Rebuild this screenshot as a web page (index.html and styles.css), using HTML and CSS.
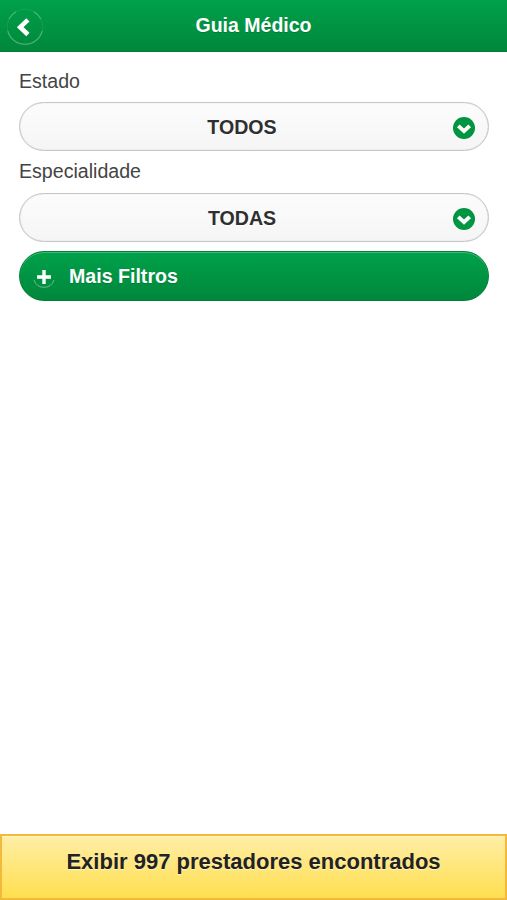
FILE: index.html
```html
<!DOCTYPE html>
<html lang="pt-BR">
<head>
<meta charset="utf-8">
<title>Guia Médico</title>
<link rel="stylesheet" href="styles.css">
</head>
<body>
<header class="header">
  <a class="back" aria-label="Voltar"><svg width="38" height="38" viewBox="0 0 38 38"><path d="M1.8 23A17.8 17.8 0 0 0 36.2 23M3 11A17.8 17.8 0 0 1 10 3.7M28 3.7A17.8 17.8 0 0 1 35 11" fill="none" stroke="#fff" stroke-opacity=".26" stroke-width="1.2"/><circle cx="19" cy="19" r="17.8" fill="none" stroke="#fff" stroke-opacity=".08"/><path d="M21.9 11.9 14.2 19.2 21.9 26.5" fill="none" stroke="#fff" stroke-width="4.6"/></svg></a>
  <h1 class="title">Guia Médico</h1>
</header>
<main class="content">
  <label class="label">Estado</label>
  <div class="select"><span class="value">TODOS</span><svg class="arrow" width="22" height="22" viewBox="0 0 22 22"><circle cx="11" cy="11" r="11" fill="#009540"/><path d="M5.3 8.9 11 14.2 16.7 8.9" fill="none" stroke="#fff" stroke-width="3.9"/></svg></div>
  <label class="label">Especialidade</label>
  <div class="select"><span class="value">TODAS</span><svg class="arrow" width="22" height="22" viewBox="0 0 22 22"><circle cx="11" cy="11" r="11" fill="#009540"/><path d="M5.3 8.9 11 14.2 16.7 8.9" fill="none" stroke="#fff" stroke-width="3.9"/></svg></div>
  <div class="more"><svg class="plus" width="24" height="24" viewBox="0 0 24 24"><path d="M2 16A10.5 10.5 0 0 0 22 16" fill="none" stroke="#fff" stroke-opacity=".4"/><path d="M12 6v14M5 13h14" stroke="#fff" stroke-width="3.4"/></svg><span>Mais Filtros</span></div>
</main>
<footer class="results">Exibir 997 prestadores encontrados</footer>
</body>
</html>
```

FILE: styles.css
```css
* {
  box-sizing: border-box;
}

body {
  margin: 0;
  height: 900px;
  display: flex;
  flex-direction: column;
  overflow: hidden;
  background: #fff;
  color: #2f2f2f;
  font: 19.6px/24px "Liberation Sans", Arial, sans-serif;
}

svg {
  display: block;
}

.header {
  height: 52px;
  display: grid;
  grid-template-columns: 44px 1fr 44px;
  border-bottom: 1px solid #007e36;
  background: linear-gradient(#00a14a, #00873c);
  color: #fff;
}

.back {
  padding: 8px 0 0 6px;
}

.title {
  margin: 0;
  padding-top: 13px;
  font-size: 19.5px;
  line-height: 24px;
  text-align: center;
  text-shadow: 0 1px 0 rgba(0, 70, 25, 0.3);
}

.content {
  flex: 1;
  padding: 17px 18px 0 19px;
}

.label {
  display: block;
  height: 33px;
  color: #444;
}

.label + .select + .label {
  height: 34px;
}

.select {
  height: 49px;
  margin-bottom: 8px;
  padding: 0 13px 0 11px;
  display: flex;
  align-items: center;
  border: 1px solid #c6c6c6;
  border-radius: 24.5px;
  background: linear-gradient(#fcfcfc, #f5f5f5);
  box-shadow: inset 0 0 1px rgba(0, 0, 0, 0.25);
  font-weight: bold;
  text-shadow: 0 1px 0 #fff;
}

.value {
  flex: 1;
  text-align: center;
}

.arrow {
  margin-top: 2px;
}

.more {
  height: 50px;
  margin-top: 9px;
  padding: 0 12px;
  display: flex;
  align-items: center;
  gap: 13px;
  border: 1px solid #007e36;
  border-radius: 25px;
  background: linear-gradient(#00a14a, #00873c);
  box-shadow: inset 0 1px 0 rgba(255, 255, 255, 0.25);
  color: #fff;
  font-weight: bold;
  text-shadow: 0 1px 0 rgba(0, 70, 25, 0.3);
}

.results {
  height: 66px;
  padding-top: 13px;
  border: 2px solid #f2b93b;
  background: linear-gradient(#ffeea6, #ffdf4f);
  box-shadow: inset 0 1px 0 rgba(255, 255, 255, 0.35);
  color: #222;
  font-size: 22px;
  line-height: 26px;
  font-weight: bold;
  text-align: center;
  text-shadow: 0 1px 0 #fff4c4;
}
```
